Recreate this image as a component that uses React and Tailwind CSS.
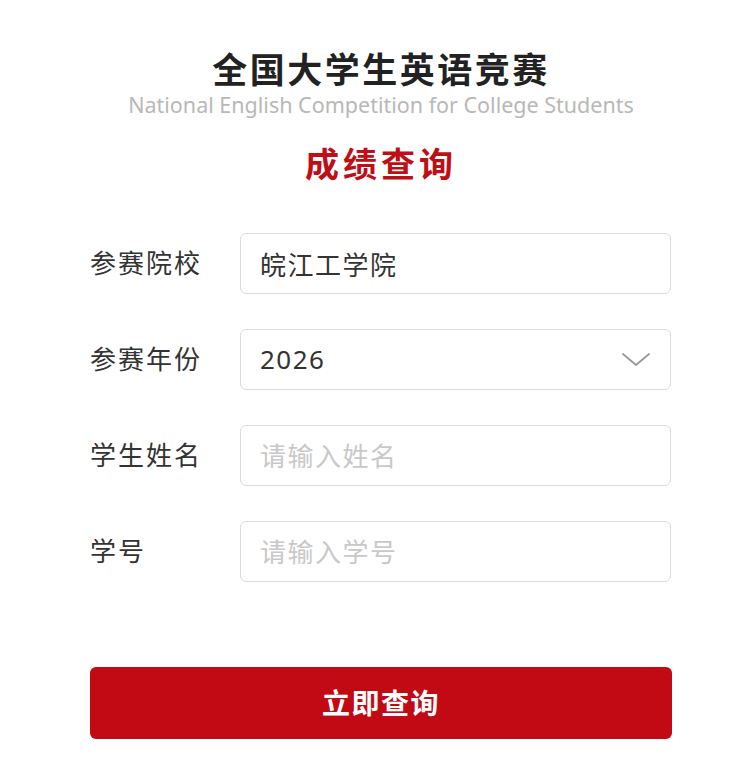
import React, { useState } from 'react'

const font = { fontFamily: '"Noto Sans", "Noto Sans CJK SC", sans-serif' }

function Field({ label, children }) {
    return (
        <div className="flex items-center">
            <label className="w-[150px] shrink-0 text-[26px] tracking-[2px] text-[#333]">{label}</label>
            {children}
        </div>
    )
}

export default function App() {
    const [form, setForm] = useState({ school: '皖江工学院', year: '2026', name: '', sid: '' })
    const change = (e) => setForm({ ...form, [e.target.name]: e.target.value })

    const inputCls = "w-[431px] h-[61px] px-[19px] rounded-md border border-[#dcdcdc] bg-white text-[26px] tracking-[1.5px] text-[#333] outline-none placeholder:text-[#c9c9c9]"

    return (
        <div className="min-h-screen bg-white" style={font}>
            <div className="w-[582px] ml-[90px] pt-[47px]">
                {/* header */}
                <div className="text-center">
                    <h1 className="text-[35px] leading-[46px] font-bold tracking-[2.5px] text-[#222]">全国大学生英语竞赛</h1>
                    <p className="mt-[-2px] text-[21.5px] leading-[28px] text-[#b8b8b8]">National English Competition for College Students</p>
                    <h2 className="mt-[22px] text-[34px] leading-[46px] font-bold tracking-[4px] text-[#c10d16]">成绩查询</h2>
                </div>

                {/* form */}
                <form className="mt-[46px] flex flex-col gap-[35px]" onSubmit={(e) => e.preventDefault()}>
                    <Field label="参赛院校">
                        <input name="school" value={form.school} onChange={change} className={inputCls} />
                    </Field>
                    <Field label="参赛年份">
                        <div className="relative">
                            <select name="year" value={form.year} onChange={change} className={inputCls + " appearance-none"}>
                                <option>2026</option>
                                <option>2025</option>
                                <option>2024</option>
                            </select>
                            <svg className="absolute right-[20px] top-1/2 -translate-y-1/2 pointer-events-none" width="30" height="16" viewBox="0 0 30 16" fill="none">
                                <path d="M2 2 L15 13 L28 2" stroke="#9a9a9a" strokeWidth="1.8" strokeLinecap="round" strokeLinejoin="round" />
                            </svg>
                        </div>
                    </Field>
                    <Field label="学生姓名">
                        <input name="name" value={form.name} onChange={change} placeholder="请输入姓名" className={inputCls} />
                    </Field>
                    <Field label="学号">
                        <input name="sid" value={form.sid} onChange={change} placeholder="请输入学号" className={inputCls} />
                    </Field>

                    <button type="submit" className="mt-[50px] h-[72px] w-full rounded-md bg-[#c10a13] text-white text-[28px] font-bold tracking-[1.5px]">
                        立即查询
                    </button>
                </form>
            </div>
        </div>
    )
}
